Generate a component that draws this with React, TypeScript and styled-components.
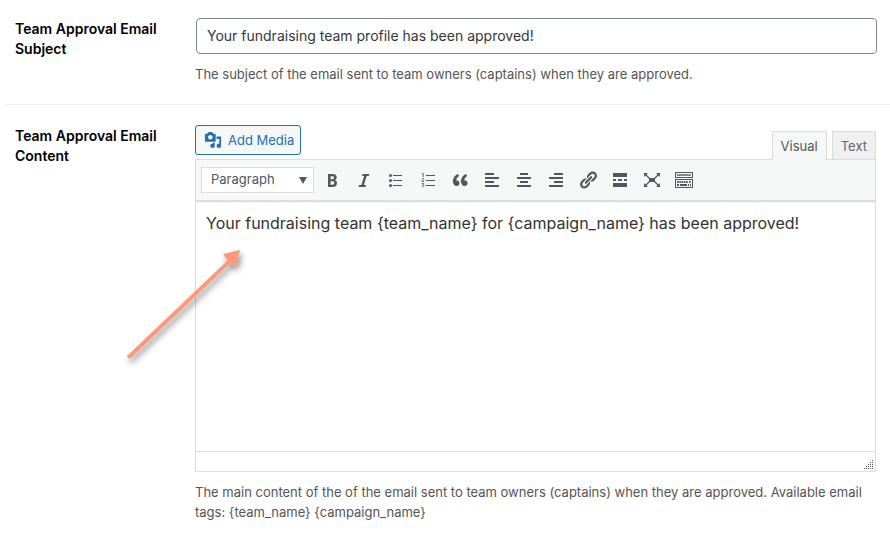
import React from "react";
import styled, { createGlobalStyle, css } from "styled-components";

const GlobalStyle = createGlobalStyle`
  *, *::before, *::after { box-sizing: border-box; }
  body {
    margin: 0;
    background: #fff;
    color: #3c434a;
    font: 13px/20px Inter, "Liberation Sans", sans-serif;
  }
  button, input, select, textarea { font: inherit; margin: 0; }
`;

const Form = styled.form`
  padding-left: 5px;
`;

const Row = styled.div`
  display: grid;
  grid-template-columns: 180px minmax(0, 1fr);
  padding: 18px 14px 20px 10px;

  & + & {
    border-top: 1px solid #eee;
    padding-top: 20px;
  }
`;

const Label = styled.label`
  padding: 1px 12px 0 0;
  color: #000;
  font-size: 14px;
  font-weight: 600;
`;

const Field = styled.div`
  position: relative;
`;

const InputFrame = styled.div`
  margin: 0 -1px 0 1px;
`;

const TextInput = styled.input`
  display: block;
  width: 100%;
  height: 36px;
  padding: 0 10px 2px;
  border: 1px solid #7e8993;
  border-radius: 4px;
  background: #fff;
  color: #32373c;
  font-size: 14px;
`;

const Help = styled.p`
  margin: 10px 0 0;
  color: #555;
`;

const EditorHead = styled.div`
  display: flex;
  justify-content: space-between;
  align-items: flex-end;
`;

const MediaButton = styled.button`
  display: flex;
  align-items: center;
  gap: 6px;
  height: 30px;
  margin-bottom: 4px;
  padding: 0 6px 0 8px;
  border: 1px solid #2271b1;
  border-radius: 3px;
  background: #f6f7f7;
  color: #2271b1;
`;

const Tabs = styled.div`
  display: flex;
  gap: 5px;
`;

const Tab = styled.button<{ $active?: boolean }>`
  position: relative;
  height: 28px;
  padding: 0 8px;
  border: 1px solid #dcdcde;
  border-bottom: 0;
  background: #f0f0f1;
  color: #646970;
  ${(p) =>
    p.$active &&
    css`
      height: 29px;
      margin-bottom: -1px;
      background: #f6f7f7;
      color: #50575e;
    `}
`;

const Editor = styled.div`
  border: 1px solid #dcdcde;
  background: #fff;
`;

const Toolbar = styled.div`
  display: flex;
  align-items: center;
  height: 40px;
  padding: 0 5px;
  background: #f6f7f7;
  box-shadow: 0 1px 1px 1px #dcdcde;
  clip-path: inset(0 0 -4px 0);
`;

const SelectBox = styled.div`
  display: grid;
  align-items: center;
  width: 113px;
  margin-right: 2px;

  & > * {
    grid-area: 1 / 1;
  }
  & > svg {
    justify-self: end;
    margin-right: 7px;
    pointer-events: none;
  }
`;

const FormatSelect = styled.select`
  width: 100%;
  height: 26px;
  padding: 0 20px 2px 9px;
  border: 1px solid #dcdcde;
  border-radius: 0;
  appearance: none;
  background: #fff;
  color: #50575e;
`;

const ToolButton = styled.button`
  display: grid;
  place-items: center;
  width: 32px;
  height: 28px;
  padding: 0;
  border: 0;
  background: none;
  color: #50575e;
`;

const Body = styled.textarea`
  display: block;
  width: 100%;
  height: 251px;
  padding: 11px 10px;
  border: 0;
  outline: 0;
  resize: none;
  background: transparent;
  color: #333;
  font-size: 16px;
  line-height: 24px;
`;

const StatusBar = styled.div`
  display: flex;
  justify-content: flex-end;
  align-items: flex-end;
  height: 20px;
  padding: 2px;
  border-top: 1px solid #dcdcde;
`;

const Pointer = styled.svg`
  position: absolute;
  top: 105px;
  left: -85px;
  pointer-events: none;
`;

const dots = (xs: number[], y: number) =>
  xs.map((x) => <rect key={`${x}-${y}`} x={x} y={y} width={1} height={1} />);

const tools: { name: string; art: React.ReactNode }[] = [
  {
    name: "Bold",
    art: (
      <path d="M6 4v13h4.54c1.37 0 2.46-.33 3.26-1 .8-.66 1.2-1.58 1.2-2.77 0-.84-.17-1.51-.51-2.01s-.9-.85-1.67-1.03v-.09c.57-.1 1.02-.4 1.36-.9s.51-1.13.51-1.91c0-1.14-.39-1.98-1.17-2.5C12.75 4.26 11.5 4 9.78 4H6zm2.57 5.15V6.26h1.36c.73 0 1.27.11 1.61.32.34.22.51.58.51 1.07 0 .54-.16.92-.47 1.15s-.82.35-1.51.35h-1.5zm0 2.19h1.6c1.44 0 2.16.53 2.16 1.61 0 .6-.17 1.05-.51 1.34s-.86.43-1.57.43H8.57v-3.38z" />
    ),
  },
  {
    name: "Italic",
    art: (
      <path d="M14.78 6h-2.13l-2.8 9h2.12l-.62 2H4.6l.62-2h2.14l2.8-9H8.03l.62-2h6.75z" />
    ),
  },
  {
    name: "Bulleted list",
    art: (
      <>
        <circle cx="4.5" cy="5.5" r="1.5" />
        <circle cx="4.5" cy="10.5" r="1.5" />
        <circle cx="4.5" cy="15.5" r="1.5" />
        <path d="M7 5h9v1H7zM7 10h9v1H7zM7 15h9v1H7z" />
      </>
    ),
  },
  {
    name: "Numbered list",
    art: (
      <>
        <path d="M8 5h9v1H8zM8 10h9v1H8zM8 15h9v1H8z" />
        <path
          d="M4 4l1.2-.7V7M3.8 9.1c.6-.8 2.1-.6 2 .3 0 .6-1.3 1.3-2 2.1h2.3M3.8 13.6h2l-1 1.1c1.6 0 1.4 2-.1 2-.4 0-.7-.1-1-.3"
          fill="none"
          stroke="currentColor"
          strokeWidth=".9"
        />
      </>
    ),
  },
  {
    name: "Blockquote",
    art: (
      <path d="M9.49 13.22c0-.74-.2-1.38-.61-1.9-.62-.78-1.83-.88-2.53-.72-.29-1.65 1.11-3.75 2.92-4.65L7.88 4c-2.73 1.3-5.42 4.28-4.96 8.05C3.21 14.43 4.59 16 6.54 16c.85 0 1.56-.25 2.12-.75s.83-1.18.83-2.03zm8.05 0c0-.74-.2-1.38-.61-1.9-.63-.78-1.83-.88-2.53-.72-.29-1.65 1.11-3.75 2.92-4.65L15.93 4c-2.73 1.3-5.41 4.28-4.95 8.05.29 2.38 1.66 3.95 3.61 3.95.85 0 1.56-.25 2.12-.75s.83-1.18.83-2.03z" />
    ),
  },
  { name: "Align left", art: <path d="M12 5V3H3v2h9zm5 4V7H3v2h14zm-5 4v-2H3v2h9zm5 4v-2H3v2h14z" /> },
  { name: "Align center", art: <path d="M14 5V3H6v2h8zm3 4V7H3v2h14zm-3 4v-2H6v2h8zm3 4v-2H3v2h14z" /> },
  { name: "Align right", art: <path d="M17 5V3H8v2h9zm0 4V7H3v2h14zm0 4v-2H8v2h9zm0 4v-2H3v2h14z" /> },
  {
    name: "Insert link",
    art: (
      <path d="M17.74 2.76c1.68 1.69 1.68 4.41 0 6.1l-1.53 1.52c-1.12 1.12-2.7 1.47-4.14 1.09l2.62-2.61.76-.77.76-.76c.84-.84.84-2.2 0-3.04-.84-.85-2.2-.85-3.04 0l-.77.76-3.38 3.38c-.37-1.44-.02-3.02 1.1-4.14l1.52-1.53c1.69-1.68 4.42-1.68 6.1 0zM8.59 13.43l5.34-5.34c.42-.42.42-1.1 0-1.52-.44-.43-1.13-.39-1.53 0l-5.33 5.34c-.42.42-.42 1.1 0 1.52.44.43 1.13.39 1.52 0zm-.76 2.29l4.14-4.15c.38 1.44.03 3.02-1.09 4.14l-1.52 1.53c-1.69 1.68-4.41 1.68-6.1 0-1.68-1.68-1.68-4.42 0-6.1l1.53-1.52c1.12-1.12 2.7-1.47 4.14-1.1l-4.14 4.15c-.85.84-.85 2.2 0 3.05.84.84 2.2.84 3.04 0z" />
    ),
  },
  {
    name: "Insert Read More tag",
    art: <path d="M17 7V3H3v4h14zM6 11V9H3v2h3zm6 0V9H8v2h4zm5 0V9h-3v2h3zm0 6v-4H3v4h14z" />,
  },
  {
    name: "Fullscreen",
    art: (
      <>
        <path d="M7 8h6v4H7zM2 3h4L2 7zM18 3v4l-4-4zM2 17v-4l4 4zM18 17h-4l4-4z" />
        <path
          d="M3 4l4.5 4.5M17 4l-4.5 4.5M3 16l4.5-4.5M17 16l-4.5-4.5"
          stroke="currentColor"
          strokeWidth="1.3"
        />
      </>
    ),
  },
  {
    name: "Toolbar toggle",
    art: (
      <>
        <path fillRule="evenodd" d="M1 2h18v6H1zM2 3v4h16V3zM1 9h18v9H1zM2 10v7h16v-7z" />
        {[3, 5, 7, 9, 11, 13, 15].map((x) => (
          <rect key={x} x={x + 0.2} y={4} width={1.4} height={2} />
        ))}
        {[3, 5.3, 7.6, 9.9, 12.2, 15].map((x) => (
          <rect key={x} x={x} y={11} width={1.6} height={2} />
        ))}
        <path d="M3 14h2v2H3zM6 14h7v2H6zM14 14h1v2h-1zM16 14h1v2h-1z" />
      </>
    ),
  },
];

export default function App() {
  return (
    <>
      <GlobalStyle />
      <Form>
        <Row>
          <Label htmlFor="subject">Team Approval Email Subject</Label>
          <Field>
            <InputFrame>
              <TextInput
                id="subject"
                type="text"
                defaultValue="Your fundraising team profile has been approved!"
              />
            </InputFrame>
            <Help>The subject of the email sent to team owners (captains) when they are approved.</Help>
          </Field>
        </Row>
        <Row>
          <Label htmlFor="content">Team Approval Email Content</Label>
          <Field>
            <EditorHead>
              <MediaButton type="button">
                <svg width="18" height="18" viewBox="0 0 20 20" fill="currentColor" aria-hidden="true">
                  <path d="M13 11V4c0-.55-.45-1-1-1h-1.67L9 1H5L3.67 3H2c-.55 0-1 .45-1 1v7c0 .55.45 1 1 1h10c.55 0 1-.45 1-1zM7 4.5c1.38 0 2.5 1.12 2.5 2.5S8.38 9.5 7 9.5 4.5 8.38 4.5 7 5.62 4.5 7 4.5zM14 6h5v10.5c0 1.38-1.12 2.5-2.5 2.5S14 17.88 14 16.5s1.12-2.5 2.5-2.5c.17 0 .34.02.5.05V9h-3V6zm-4 8.05V13h2v3.5c0 1.38-1.12 2.5-2.5 2.5S7 17.88 7 16.5 8.12 14 9.5 14c.17 0 .34.02.5.05z" />
                </svg>
                Add Media
              </MediaButton>
              <Tabs>
                <Tab type="button" $active>
                  Visual
                </Tab>
                <Tab type="button">Text</Tab>
              </Tabs>
            </EditorHead>
            <Editor>
              <Toolbar>
                <SelectBox>
                  <FormatSelect aria-label="Text format" defaultValue="Paragraph">
                    <option>Paragraph</option>
                    <option>Heading 1</option>
                    <option>Heading 2</option>
                  </FormatSelect>
                  <svg width="8" height="7" viewBox="0 0 8 7" fill="#50575e" aria-hidden="true">
                    <path d="M0 0h8L4 7z" />
                  </svg>
                </SelectBox>
                {tools.map((tool) => (
                  <ToolButton key={tool.name} type="button" aria-label={tool.name}>
                    <svg width="20" height="20" viewBox="0 0 20 20" fill="currentColor" aria-hidden="true">
                      {tool.art}
                    </svg>
                  </ToolButton>
                ))}
              </Toolbar>
              <Body
                id="content"
                spellCheck={false}
                defaultValue="Your fundraising team {team_name} for {campaign_name} has been approved!"
              />
              <StatusBar>
                <svg width="9" height="9" viewBox="0 0 9 9" fill="#50575e" aria-hidden="true">
                  {dots([8], 0)}
                  {dots([6, 8], 2)}
                  {dots([4, 6, 8], 4)}
                  {dots([2, 4, 6, 8], 6)}
                  {dots([0, 2, 4, 6, 8], 8)}
                </svg>
              </StatusBar>
            </Editor>
            <Help>
              {
                "The main content of the of the email sent to team owners (captains) when they are approved. Available email tags: {team_name} {campaign_name}"
              }
            </Help>
            <Pointer width="150" height="150" viewBox="0 0 150 150" aria-hidden="true">
              <defs>
                <filter id="shade" x="-20%" y="-20%" width="150%" height="150%">
                  <feDropShadow dx="2" dy="4" stdDeviation="3" floodColor="#000" floodOpacity=".45" />
                </filter>
              </defs>
              <path
                d="M16.700 126.200L117.500 30.500l-4.500-6.500L130 20l-4.500 17-5-4L19.500 129.200z"
                fill="#fa9a78"
                filter="url(#shade)"
              />
            </Pointer>
          </Field>
        </Row>
      </Form>
    </>
  );
}
